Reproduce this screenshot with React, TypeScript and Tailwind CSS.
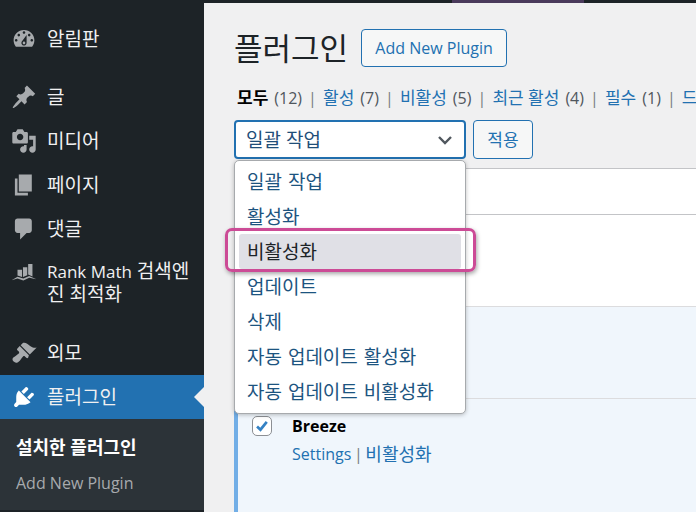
const icons: Record<string, string> = {
  dashboard:
    "M3.76 16h12.48c1.1-1.37 1.76-3.11 1.76-5 0-4.42-3.58-8-8-8s-8 3.58-8 8c0 1.89.66 3.63 1.76 5zM10 4c.55 0 1 .45 1 1s-.45 1-1 1-1-.45-1-1 .45-1 1-1zM6 6c.55 0 1 .45 1 1s-.45 1-1 1-1-.45-1-1 .45-1 1-1zm8 0c.55 0 1 .45 1 1s-.45 1-1 1-1-.45-1-1 .45-1 1-1zm-5.37 5.55L12 7v6c0 1.1-.9 2-2 2s-2-.9-2-2c0-.57.24-1.08.63-1.45zM4 10c.55 0 1 .45 1 1s-.45 1-1 1-1-.45-1-1 .45-1 1-1zm12 0c.55 0 1 .45 1 1s-.45 1-1 1-1-.45-1-1 .45-1 1-1zm-5 3c0-.55-.45-1-1-1s-1 .45-1 1 .45 1 1 1 1-.45 1-1z",
  post: "M10.44 3.02l1.82-1.82 6.36 6.35-1.83 1.82c-1.05-.68-2.48-.57-3.41.36l-.75.75c-.92.93-1.04 2.35-.35 3.41l-1.83 1.82-2.41-2.41-2.8 2.79c-.42.42-3.38 2.71-3.8 2.29s1.86-3.39 2.28-3.81l2.79-2.79L4.1 9.36l1.83-1.82c1.05.69 2.48.57 3.4-.36l.75-.75c.93-.92 1.05-2.35.36-3.41z",
  media:
    "M13 11V4c0-.55-.45-1-1-1h-1.67L9 1H5L3.67 3H2c-.55 0-1 .45-1 1v7c0 .55.45 1 1 1h10c.55 0 1-.45 1-1zM7 4.5c1.38 0 2.5 1.12 2.5 2.5S8.38 9.5 7 9.5 4.5 8.38 4.5 7 5.62 4.5 7 4.5zM14 6h5v10.5c0 1.38-1.12 2.5-2.5 2.5S14 17.88 14 16.5s1.12-2.5 2.5-2.5c.17 0 .34.02.5.05V9h-3V6zm-4 8.05V13h2v3.5c0 1.38-1.12 2.5-2.5 2.5S7 17.88 7 16.5 8.12 14 9.5 14c.17 0 .34.02.5.05z",
  page: "M6 15V2h10v13H6zm-1 1h8v2H3V5h2v11z",
  comment:
    "M5 2h9c1.1 0 2 .9 2 2v7c0 1.1-.9 2-2 2h-2l-5 5v-5H5c-1.1 0-2-.9-2-2V4c0-1.1.9-2 2-2z",
  rank: "M0.5 15.5l4.5-2.6 4.5 1.4 4.5-2 5.5 2.6-5.5-1.2-4.5 2-4.5-1.4zM5 7.5h3.5v5.6L5 12zM9.2 5.5h3.3v6.2l-3.3 1.4zM13.2 3h3.3v9.6l-3.3-1.4z",
  appearance:
    "M14.48 11.06L7.41 3.99l1.5-1.5c.5-.56 2.3-.47 3.51.32 1.21.8 1.43 1.28 2.91 2.1 1.18.64 2.45 1.26 4.45.85zm-.71.71L6.7 4.7 4.93 6.47c-.39.39-.39 1.02 0 1.41l1.06 1.06c.39.39.39 1.03 0 1.42-.6.6-1.43 1.11-2.21 1.69-.35.26-.7.53-1.01.84C1.43 13.23.4 14.96 2.04 16.6c1.65 1.65 3.37.62 4.72-.73.31-.31.58-.66.84-1.01.58-.78 1.09-1.61 1.69-2.21.39-.39 1.03-.39 1.42 0l1.06 1.06c.39.39 1.02.39 1.41 0z",
  plugin:
    "M13.11 4.36L9.87 7.6 8 5.73l3.24-3.24c.35-.34 1.05-.2 1.56.32.52.51.66 1.21.31 1.55zm-8 1.77l.91-1.12 9.01 9.01-1.19.84c-.71.71-2.63 1.16-3.82 1.16H6.14L4.9 17.26c-.59.59-1.54.59-2.12 0-.59-.58-.59-1.53 0-2.12l1.24-1.24v-3.88c0-1.13.4-3.19 1.09-3.89zm7.26 3.97l3.24-3.24c.34-.35 1.04-.21 1.55.31.52.51.66 1.21.31 1.55l-3.24 3.25z",
};

const MenuIcon = ({ name }: { name: string }) => (
  <svg viewBox="0 0 20 20" className="w-[26px] h-[26px] shrink-0 fill-current">
    <path fillRule="evenodd" d={icons[name]} />
  </svg>
);

const MenuItem = ({
  icon,
  label,
  className = "",
}: {
  icon: string;
  label: string;
  className?: string;
}) => (
  <div className={`flex items-center h-11 pl-[11px] gap-[10px] text-[#a7aaad] ${className}`}>
    <MenuIcon name={icon} />
    <span className="text-[19px] text-[#f0f0f1]">{label}</span>
  </div>
);

const bulkActions = [
  "일괄 작업",
  "활성화",
  "비활성화",
  "업데이트",
  "삭제",
  "자동 업데이트 활성화",
  "자동 업데이트 비활성화",
];

const filters = [
  { label: "활성", count: 7 },
  { label: "비활성", count: 5 },
  { label: "최근 활성", count: 4 },
  { label: "필수", count: 1 },
  { label: "드롭인", count: 1 },
];

export default function App() {
  return (
    <div className="relative flex w-[696px] h-[512px] overflow-hidden bg-[#f0f0f1] font-['Open_Sans','Noto_Sans_CJK_KR',sans-serif] text-[16px] text-[#3c434a]">
      {/* Sidebar */}
      <aside className="w-[204px] shrink-0 bg-[#1d2327] pt-[17px]">
        <MenuItem icon="dashboard" label="알림판" />
        <div className="mt-[14px]">
          <MenuItem icon="post" label="글" />
          <MenuItem icon="media" label="미디어" />
          <MenuItem icon="page" label="페이지" />
          <MenuItem icon="comment" label="댓글" />
        </div>
        <div className="flex items-start pl-[11px] gap-[10px] h-[80px] pt-[9px] text-[#a7aaad]">
          <MenuIcon name="rank" />
          <span className="w-[150px] text-[19px] leading-[23px] text-[#f0f0f1]">
            <span className="text-[17px] leading-[23px]">Rank Math</span> 검색엔진 최적화
          </span>
        </div>
        <MenuItem icon="appearance" label="외모" />
        <div className="relative">
          <MenuItem icon="plugin" label="플러그인" className="bg-[#2271b1] !text-white" />
          <div className="absolute right-0 top-[12px] w-0 h-0 border-y-[10px] border-y-transparent border-r-[10px] border-r-[#f0f0f1]" />
        </div>
        <div className="h-[91px] bg-[#2c3338] pl-4 pt-[17px] text-[16px]">
          <div className="text-[18px] font-bold text-white leading-[22px]">설치한 플러그인</div>
          <div className="mt-[14px] leading-[22px] text-[#a7aaad]">Add New Plugin</div>
        </div>
      </aside>

      {/* Main */}
      <main className="flex-1 min-w-0 flex flex-col">
        <div className="flex h-[3px] shrink-0 bg-[#1d2327]">
          <div className="ml-[248px] w-[132px] bg-[#4a3a5c]" />
        </div>

        <div className="pl-[30px]">
          <div className="flex items-center gap-[13px] mt-[26px] h-[38px]">
            <h1 className="text-[31px] leading-[38px] text-[#1d2327] -mt-[1px]">플러그인</h1>
            <button className="h-[38px] w-[146px] rounded-[4px] border border-[#2271b1] bg-[#f6f7f7] text-[16px] text-[#2271b1]">
              Add New Plugin
            </button>
          </div>

          <div className="flex mt-[19px] h-[22px] items-center whitespace-nowrap pl-[3px] pt-[1px] leading-[22px]">
            <span className="text-[17px] font-bold text-black">모두</span>
            <span className="ml-[6px] text-[#50575e]">(12)</span>
            {filters.map((f) => (
              <span key={f.label} className="flex items-center">
                <span className="w-[21px] text-center text-[#787c82]">|</span>
                <span className="text-[17px] text-[#2271b1]">{f.label}</span>
                <span className="ml-[6px] text-[#50575e]">({f.count})</span>
              </span>
            ))}
          </div>

          <div className="flex gap-[7px] mt-[12px] h-[39px]">
            <div className="flex items-center justify-between w-[232px] rounded-[4px] border-2 border-[#2271b1] bg-white pl-[10px] pr-[9px] text-[19px] text-[#1f4e79]">
              <span className="pt-[1px]">일괄 작업</span>
              <svg viewBox="0 0 20 20" className="w-[20px] h-[20px] fill-none stroke-[#50575e] stroke-[2.4]">
                <path d="M4 7l6 6 6-6" />
              </svg>
            </div>
            <button className="w-[60px] rounded-[4px] border border-[#2271b1] bg-[#f6f7f7] text-[17px] text-[#2271b1]">
              적용
            </button>
          </div>

          {/* Plugin table */}
          <div className="mt-[9px] border-t border-[#c3c4c7]">
            <div className="h-[46px] bg-white border-b border-[#c3c4c7] border-l" />
            <div className="h-[92px] bg-white border-b border-[#dcdcde] border-l border-l-[#c3c4c7]" />
            <div className="h-[92px] bg-[#f0f6fc] border-b border-[#dcdcde] border-l-[4px] border-l-[#72aee6]" />
            <div className="h-[120px] flex gap-[20px] bg-[#f0f6fc] border-l-[4px] border-l-[#72aee6] pl-[14px] pt-[17px]">
              <div className="flex items-center justify-center w-[20px] h-[20px] rounded-[5px] border border-[#8c8f94] bg-white">
                <svg viewBox="0 0 20 20" className="w-[18px] h-[18px] fill-none stroke-[#3582c4] stroke-[3]">
                  <path d="M4.5 10.5l3.8 3.6 7-8.6" />
                </svg>
              </div>
              <div>
                <div className="font-bold text-black leading-[22px] -mt-[1px]">Breeze</div>
                <div className="flex items-center mt-[6px] leading-[22px] text-[#2271b1]">
                  <span>Settings</span>
                  <span className="w-[14px] text-center text-[#787c82]">|</span>
                  <span className="text-[18px]">비활성화</span>
                </div>
              </div>
            </div>
          </div>
        </div>
      </main>

      {/* Open select dropdown */}
      <div className="absolute left-[234px] top-[160px] w-[232px] h-[254px] rounded-[5px] border border-[#a7aaad] bg-white px-1 pt-[3px] shadow-[0_1px_4px_rgba(0,0,0,0.25)]">
        {bulkActions.map((action, i) => (
          <div
            key={action}
            className={`flex items-center h-[35px] pl-[8px] pt-[1px] rounded-[3px] text-[19px] [word-spacing:1px] ${
              i === 2 ? "bg-[#e0e0e6] text-[#1d2327]" : "text-[#1c5480]"
            }`}
          >
            {action}
          </div>
        ))}
      </div>

      {/* Pink highlight */}
      <div className="absolute left-[225px] top-[228px] w-[251px] h-[44px] rounded-[7px] border-[3px] border-[#cc4b96] shadow-[1px_2px_4px_rgba(0,0,0,0.35)]" />
    </div>
  );
}
